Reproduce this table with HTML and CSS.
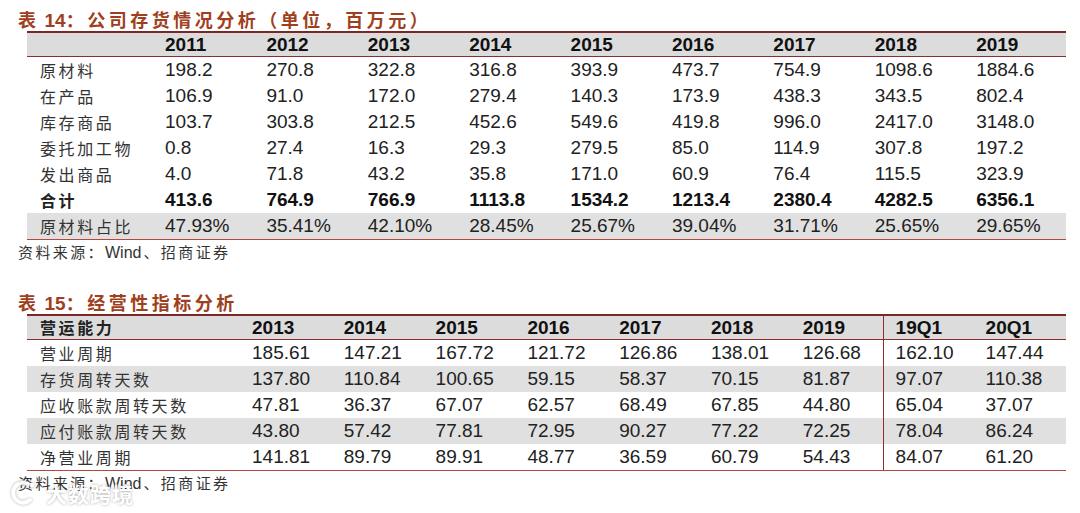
FILE: index.html
```html
<!DOCTYPE html>
<html lang="zh-CN">
<head>
<meta charset="utf-8">
<title>表14 表15</title>
<link rel="stylesheet" href="styles.css">
</head>
<body>
<div class="page">
  <div class="title"><span class="cjk">表</span> <span class="num">14</span><span class="cjk">：公司存货情况分析（单位，百万元）</span></div>
  <div class="tbl t1">
    <div class="row head"><div class="lab"></div><div>2011</div><div>2012</div><div>2013</div><div>2014</div><div>2015</div><div>2016</div><div>2017</div><div>2018</div><div>2019</div></div>
    <div class="row"><div class="lab">原材料</div><div>198.2</div><div>270.8</div><div>322.8</div><div>316.8</div><div>393.9</div><div>473.7</div><div>754.9</div><div>1098.6</div><div>1884.6</div></div>
    <div class="row"><div class="lab">在产品</div><div>106.9</div><div>91.0</div><div>172.0</div><div>279.4</div><div>140.3</div><div>173.9</div><div>438.3</div><div>343.5</div><div>802.4</div></div>
    <div class="row"><div class="lab">库存商品</div><div>103.7</div><div>303.8</div><div>212.5</div><div>452.6</div><div>549.6</div><div>419.8</div><div>996.0</div><div>2417.0</div><div>3148.0</div></div>
    <div class="row"><div class="lab">委托加工物</div><div>0.8</div><div>27.4</div><div>16.3</div><div>29.3</div><div>279.5</div><div>85.0</div><div>114.9</div><div>307.8</div><div>197.2</div></div>
    <div class="row"><div class="lab">发出商品</div><div>4.0</div><div>71.8</div><div>43.2</div><div>35.8</div><div>171.0</div><div>60.9</div><div>76.4</div><div>115.5</div><div>323.9</div></div>
    <div class="row total"><div class="lab">合计</div><div>413.6</div><div>764.9</div><div>766.9</div><div>1113.8</div><div>1534.2</div><div>1213.4</div><div>2380.4</div><div>4282.5</div><div>6356.1</div></div>
    <div class="row shade last"><div class="lab">原材料占比</div><div>47.93%</div><div>35.41%</div><div>42.10%</div><div>28.45%</div><div>25.67%</div><div>39.04%</div><div>31.71%</div><div>25.65%</div><div>29.65%</div></div>
  </div>
  <div class="src"><span class="cjk">资料来源：</span><span class="en">Wind</span><span class="cjk">、招商证券</span></div>

  <div class="title title2"><span class="cjk">表</span> <span class="num">15</span><span class="cjk">：经营性指标分析</span></div>
  <div class="tbl t2">
    <div class="row head"><div class="lab">营运能力</div><div>2013</div><div>2014</div><div>2015</div><div>2016</div><div>2017</div><div>2018</div><div>2019</div><div class="div">19Q1</div><div>20Q1</div></div>
    <div class="row"><div class="lab">营业周期</div><div>185.61</div><div>147.21</div><div>167.72</div><div>121.72</div><div>126.86</div><div>138.01</div><div>126.68</div><div class="div">162.10</div><div>147.44</div></div>
    <div class="row shade"><div class="lab">存货周转天数</div><div>137.80</div><div>110.84</div><div>100.65</div><div>59.15</div><div>58.37</div><div>70.15</div><div>81.87</div><div class="div">97.07</div><div>110.38</div></div>
    <div class="row"><div class="lab">应收账款周转天数</div><div>47.81</div><div>36.37</div><div>67.07</div><div>62.57</div><div>68.49</div><div>67.85</div><div>44.80</div><div class="div">65.04</div><div>37.07</div></div>
    <div class="row shade"><div class="lab">应付账款周转天数</div><div>43.80</div><div>57.42</div><div>77.81</div><div>72.95</div><div>90.27</div><div>77.22</div><div>72.25</div><div class="div">78.04</div><div>86.24</div></div>
    <div class="row last"><div class="lab">净营业周期</div><div>141.81</div><div>89.79</div><div>89.91</div><div>48.77</div><div>36.59</div><div>60.79</div><div>54.43</div><div class="div">84.07</div><div>61.20</div></div>
  </div>
  <div class="src src2"><span class="cjk">资料来源：</span><span class="en">Wind</span><span class="cjk">、招商证券</span></div>

  <div class="watermark">
    <svg class="wm-logo" width="30" height="28" viewBox="0 0 30 28"><path d="M20 5 A10 10 0 1 0 22 21" fill="none" stroke="#fff" stroke-width="4" stroke-linecap="round"/><circle cx="24" cy="6" r="2.5" fill="#fff"/></svg>
    <span class="wm-text">大数跨境</span>
  </div>
</div>
</body>
</html>
```
FILE: styles.css
```css
html, body {
  margin: 0;
  padding: 0;
  background: #ffffff;
}
.page {
  position: relative;
  width: 1080px;
  height: 513px;
  overflow: hidden;
  font-family: "Liberation Sans", Arial, "Noto Sans CJK SC", sans-serif;
  color: #222;
}
.cjk {
  font-family: "Noto Sans CJK SC", sans-serif;
}
.title {
  padding: 7px 0 0 18px;
  height: 24px;
  line-height: 24px;
  font-size: 18px;
  font-weight: 700;
  color: #9f3f1d;
  white-space: nowrap;
}
.title .cjk {
  letter-spacing: 3.5px;
}
.title .num {
  font-family: "Liberation Sans", Arial, sans-serif;
  font-size: 19px;
  font-weight: 700;
}
.title2 {
  padding-top: 0;
  margin-top: 26px;
}
.tbl {
  margin-left: 27px;
  width: 1039px;
  border-top: 2px solid #7d2626;
}
.row {
  display: grid;
  height: 26px;
  line-height: 26px;
  font-size: 19px;
  white-space: nowrap;
}
.t1 .row {
  grid-template-columns: 138px repeat(8, 101.4px) 1fr;
}
.t2 .row {
  grid-template-columns: 213px repeat(7, 91.8px) 91px 1fr;
}
.t2 .row > div {
  padding-left: 12px;
}
.row .lab {
  padding-left: 13px;
  font-family: "Noto Sans CJK SC", sans-serif;
  font-size: 16px;
  letter-spacing: 2.6px;
  color: #333;
}
.t2 .row > .lab {
  padding-left: 13px;
}
.row.head {
  height: 23px;
  line-height: 23px;
  background: #dcdcdc;
  border-bottom: 1px solid #8a2f2f;
  font-weight: 700;
  color: #111;
}
.row.head .lab {
  font-weight: 700;
  color: #222;
}
.row.total {
  font-weight: 700;
  color: #111;
}
.row.total .lab {
  font-weight: 700;
  color: #222;
}
.row.shade {
  background: #e0e0e0;
}
.row.last {
  border-bottom: 1px solid #b04a3e;
}
.t2 .row > .div {
  border-left: 1.5px solid #8a2f2f;
}
.src {
  padding-left: 18px;
  height: 24px;
  line-height: 24px;
  font-size: 15px;
  color: #333;
}
.src .cjk {
  letter-spacing: 2.4px;
}
.src .en {
  font-family: "Liberation Sans", Arial, sans-serif;
  font-size: 16px;
  margin-right: 2px;
}
.src2 {
  margin-top: 0;
}
.watermark {
  position: absolute;
  left: 8px;
  top: 478px;
  display: flex;
  align-items: center;
  gap: 8px;
  opacity: 0.92;
  filter: drop-shadow(0 0 1.5px rgba(0, 0, 0, 0.35));
}
.wm-text {
  font-family: "Noto Sans CJK SC", sans-serif;
  font-size: 21px;
  font-weight: 700;
  color: #ffffff;
  letter-spacing: 1px;
}
```
